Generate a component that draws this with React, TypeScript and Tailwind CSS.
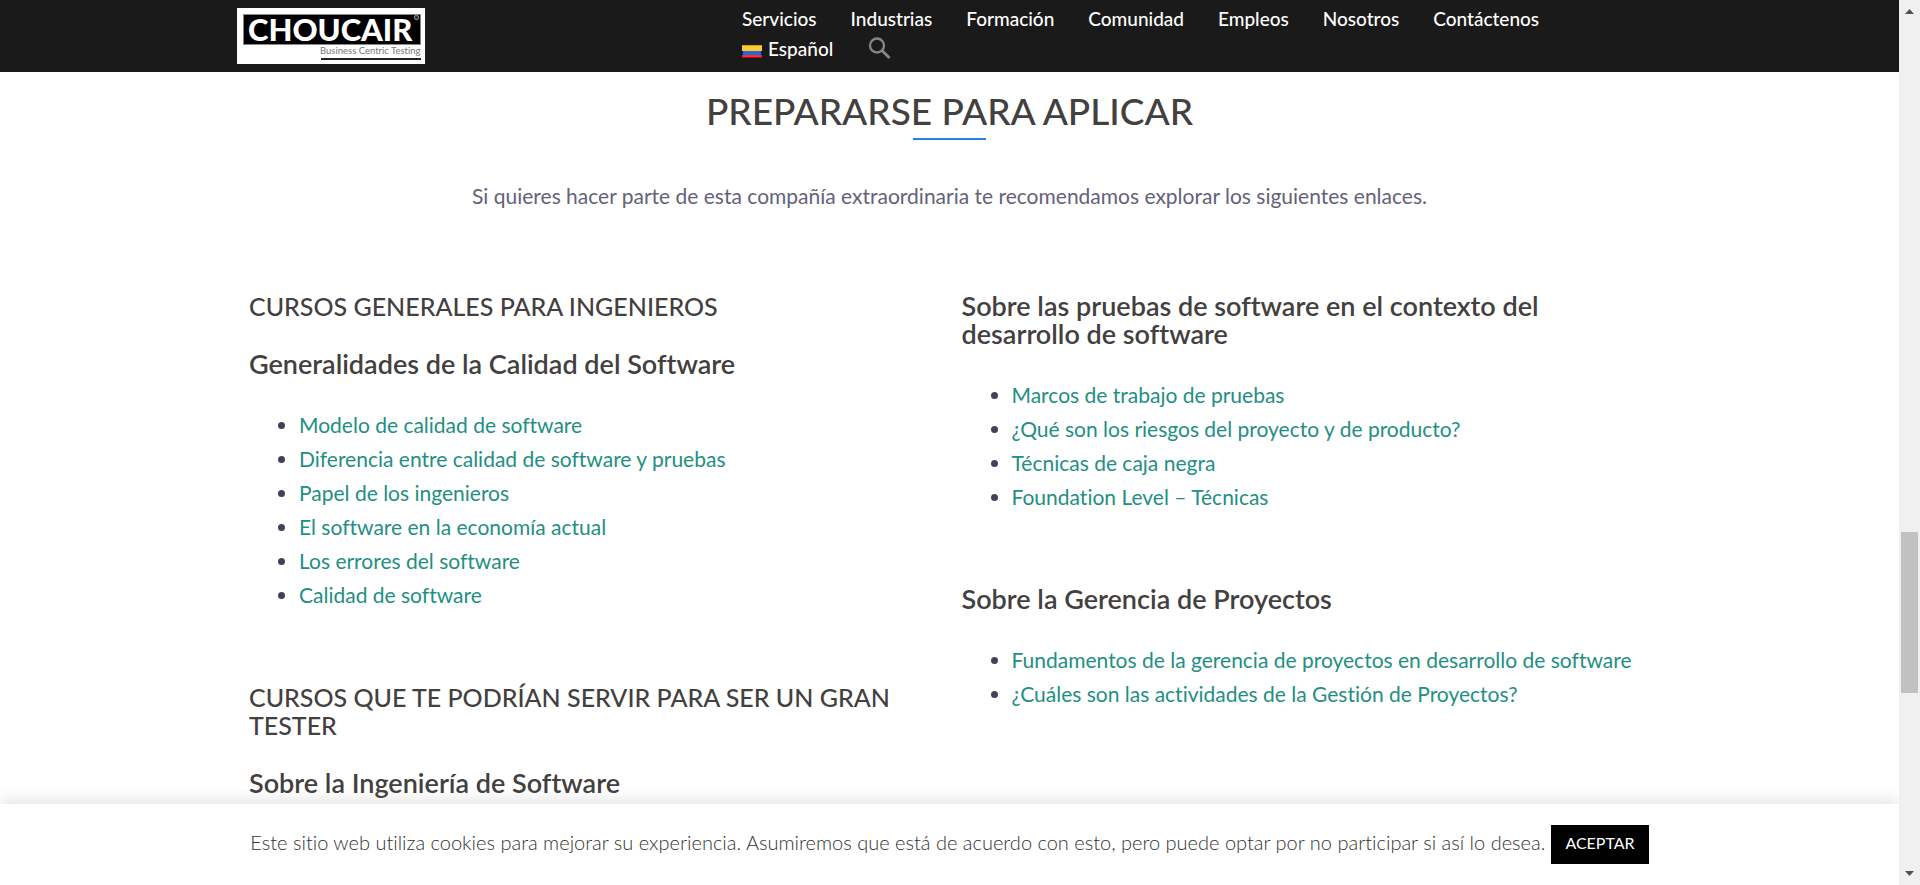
import React from "react";

const navItems = ["Servicios", "Industrias", "Formación", "Comunidad", "Empleos", "Nosotros", "Contáctenos"];

function Logo() {
  return (
    <a href="#" aria-label="Choucair Business Centric Testing" className="mt-2 block h-14 w-47 shrink-0 bg-white">
      <svg viewBox="0 0 188 56" className="h-full w-full" aria-hidden="true">
        <rect x="6.500" y="6.500" width="177" height="30" fill="#000" stroke="#8a8a8a" strokeWidth="1" />
        <text x="11" y="32.500" fontFamily="Lato, sans-serif" fontWeight="900" fontSize="31" fill="#fff">CHOUCAIR</text>
        <circle cx="179.500" cy="9.500" r="2.200" fill="#333" stroke="#999" strokeWidth="1" />
        <text x="83" y="46" fontFamily="Lato, sans-serif" fontSize="9.5" fill="#777">Business Centric Testing</text>
        <rect x="84" y="50" width="100" height="2" fill="#222" />
      </svg>
    </a>
  );
}

function Flag() {
  return (
    <svg viewBox="0 0 20 13" className="mt-1 h-[13px] w-5" aria-hidden="true">
      <rect width="20" height="6" fill="#f6cf2c" />
      <rect width="20" height="1" fill="#d9a400" />
      <rect y="6" width="20" height="4" fill="#2f62dc" />
      <rect y="10" width="20" height="3" fill="#e23a3a" />
      <rect y="12" width="20" height="1" fill="#c80000" />
      <rect y="6" width="1" height="4" fill="#0000c8" />
      <rect x="19" y="6" width="1" height="4" fill="#0000c8" />
    </svg>
  );
}

function Header() {
  return (
    <header className="h-18 bg-[#1a1a1a]">
      <div className="mx-auto flex w-full max-w-[1425px] items-start">
        <Logo />
        <nav className="ml-[317px] flex flex-1 flex-wrap gap-x-[34px] pt-1 text-[19px] leading-[30px] font-medium text-white">
          {navItems.map((item) => (
            <a key={item} href="#">{item}</a>
          ))}
          <div className="flex basis-full items-center gap-[34px]">
            <a href="#" className="flex items-center gap-1.5">
              <Flag />
              Español
            </a>
            <button type="button" aria-label="Buscar">
              <svg viewBox="0 0 24 24" className="h-6 w-6" fill="none" stroke="#848484" aria-hidden="true">
                <circle cx="10" cy="8.500" r="7" strokeWidth="2.400" />
                <path d="M15 13.500L22.500 21" strokeWidth="3" />
              </svg>
            </button>
          </div>
        </nav>
      </div>
    </header>
  );
}

function Title({ children }: { children: React.ReactNode }) {
  return <h3 className="mb-[30px] text-[25px] leading-7 font-medium text-[#434040]">{children}</h3>;
}

function Subtitle({ children }: { children: React.ReactNode }) {
  return <h4 className="mb-[30px] text-[27px] leading-7 font-semibold text-[#434040]">{children}</h4>;
}

function Links({ items }: { items: string[] }) {
  return (
    <ul className="mb-[71px] list-disc pl-[50px] text-[21px] leading-[34px] text-[#43405c]">
      {items.map((item) => (
        <li key={item}>
          <a href="#" className="text-[#238f82]">{item}</a>
        </li>
      ))}
    </ul>
  );
}

function Scrollbar() {
  return (
    <div className="relative z-20 flex w-[21px] shrink-0 flex-col items-center bg-[#f0f0f0]" aria-hidden="true">
      <svg viewBox="0 0 9 5" className="mt-[9px] h-[5px] w-[9px]" fill="#505050"><path d="M4.500 0L9 5H0z" /></svg>
      <div className="grow-[518]" />
      <div className="w-[17px] grow-[161] bg-[#c1c1c1]" />
      <div className="grow-[178]" />
      <svg viewBox="0 0 9 5" className="mb-[9px] h-[5px] w-[9px]" fill="#505050"><path d="M0 0H9L4.500 5z" /></svg>
    </div>
  );
}

export default function App() {
  return (
    <div className="flex h-screen overflow-hidden bg-white font-['Lato','Open_Sans',sans-serif] [font-variant-ligatures:none]">
      <div className="relative min-w-0 flex-1 overflow-hidden">
        <Header />
        <main className="mx-auto max-w-[1425px]">
          <section className="flex flex-col items-center pt-[17px]">
            <h2 className="text-[37px] leading-11 font-medium text-[#434040]">PREPARARSE PARA APLICAR</h2>
            <div className="mt-[5px] h-0.5 w-[73px] bg-[#2a7de1]" />
            <p className="mt-[39px] text-[21px] leading-[34px] text-[#646278]">
              Si quieres hacer parte de esta compañía extraordinaria te recomendamos explorar los siguientes enlaces.
            </p>
          </section>
          <div className="mt-[79px] grid grid-cols-2">
            <section className="px-3">
              <Title>CURSOS GENERALES PARA INGENIEROS</Title>
              <Subtitle>Generalidades de la Calidad del Software</Subtitle>
              <Links
                items={[
                  "Modelo de calidad de software",
                  "Diferencia entre calidad de software y pruebas",
                  "Papel de los ingenieros",
                  "El software en la economía actual",
                  "Los errores del software",
                  "Calidad de software",
                ]}
              />
              <Title>CURSOS QUE TE PODRÍAN SERVIR PARA SER UN GRAN TESTER</Title>
              <Subtitle>Sobre la Ingeniería de Software</Subtitle>
            </section>
            <section className="px-3">
              <Subtitle>Sobre las pruebas de software en el contexto del desarrollo de software</Subtitle>
              <Links
                items={[
                  "Marcos de trabajo de pruebas",
                  "¿Qué son los riesgos del proyecto y de producto?",
                  "Técnicas de caja negra",
                  "Foundation Level – Técnicas",
                ]}
              />
              <Subtitle>Sobre la Gerencia de Proyectos</Subtitle>
              <Links
                items={[
                  "Fundamentos de la gerencia de proyectos en desarrollo de software",
                  "¿Cuáles son las actividades de la Gestión de Proyectos?",
                ]}
              />
            </section>
          </div>
        </main>
        <div
          role="region"
          aria-label="Cookies"
          className="absolute inset-x-0 bottom-0 flex h-[81px] items-center justify-center gap-1.5 bg-white text-[20px] font-light text-[#333] shadow-[0_-4px_14px_rgba(120,120,120,0.2)]"
        >
          <p className="pb-1.5">
            Este sitio web utiliza cookies para mejorar su experiencia. Asumiremos que está de acuerdo con esto, pero puede optar por no participar si así lo desea.
          </p>
          <button type="button" className="h-[39px] bg-black px-3.5 pb-1 text-[16px] font-normal text-white">ACEPTAR</button>
        </div>
      </div>
      <Scrollbar />
    </div>
  );
}
